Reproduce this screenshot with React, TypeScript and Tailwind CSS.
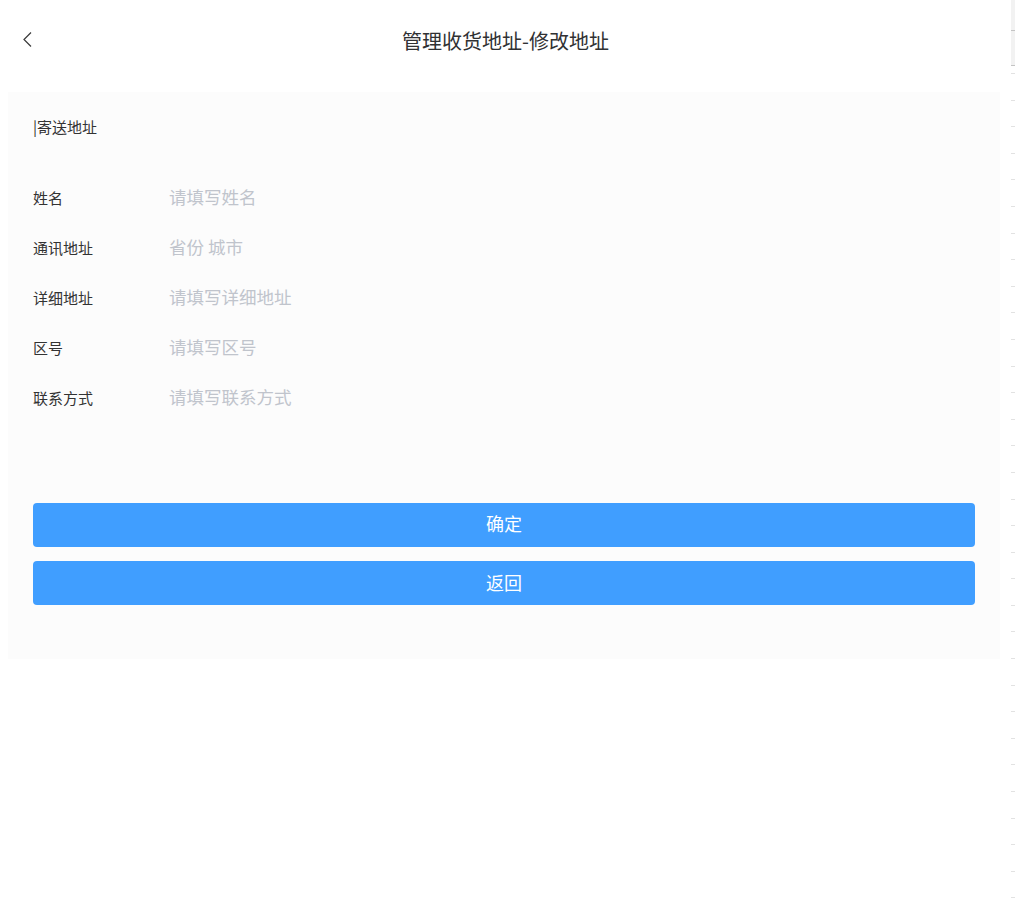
import { FC } from "react";

const FIELDS = [
  { label: "姓名", placeholder: "请填写姓名" },
  { label: "通讯地址", placeholder: "省份 城市" },
  { label: "详细地址", placeholder: "请填写详细地址" },
  { label: "区号", placeholder: "请填写区号" },
  { label: "联系方式", placeholder: "请填写联系方式" },
];

const FONT = "font-['Microsoft_YaHei','Noto_Sans_CJK_SC',sans-serif]";

// thin strip on the right edge of the window
const SideStrip: FC = () => (
  <div className="w-[4px] shrink-0 flex flex-col">
    <div className="h-[31px] bg-[#f2f2f2] border-b border-[#c4c4c4]" />
    <div className="h-[35px] bg-[#f2f2f2] border-b border-[#c4c4c4]" />
    <div className="h-[7px]" />
    {Array.from({ length: 32 }).map((_, i) => (
      <div key={i} className="h-[26.6px] shrink-0 border-t border-[#e2e2e2]" />
    ))}
  </div>
);

export default function App() {
  return (
    <div className={`flex w-[1015px] min-h-[923px] bg-white ${FONT}`}>
      <div className="flex-1">
        {/* Header */}
        <header className="relative h-[84px] flex items-center justify-center">
          <button className="absolute left-[22px] top-[31px] text-[#333]" aria-label="back">
            <svg width="11" height="17" viewBox="0 0 11 17" fill="none">
              <path d="M9 1.5L2 8.5l7 7" stroke="#3a3a3a" strokeWidth="1.2" />
            </svg>
          </button>
          <h1 className="text-[20px] text-[#303133] leading-[28px] -mt-[2px]">
            管理收货地址-修改地址
          </h1>
        </header>

        {/* Card */}
        <div className="mt-[8px] ml-[8px] w-[992px] bg-[#fcfcfc] pt-[25px] px-[25px] pb-[54px]">
          <div className="text-[15px] leading-[20px] text-[#333]">|寄送地址</div>

          <div className="mt-[36px]">
            {FIELDS.map((f) => (
              <div key={f.label} className="h-[50px] flex items-center">
                <span className="w-[137px] text-[15px] leading-[20px] text-[#333]">{f.label}</span>
                <span className="text-[17.5px] leading-[24px] -mt-[2px] -ml-[1px] text-[#c0c4cc]">
                  {f.placeholder}
                </span>
              </div>
            ))}
          </div>

          <div className="mt-[80px] flex flex-col gap-[14px]">
            <button className="h-[44px] rounded-[4px] bg-[#409eff] text-white text-[18px] leading-[24px] pb-[4px]">
              确定
            </button>
            <button className="h-[44px] rounded-[4px] bg-[#409eff] text-white text-[18px] leading-[24px] pb-[2px]">
              返回
            </button>
          </div>
        </div>
      </div>
      <SideStrip />
    </div>
  );
}
